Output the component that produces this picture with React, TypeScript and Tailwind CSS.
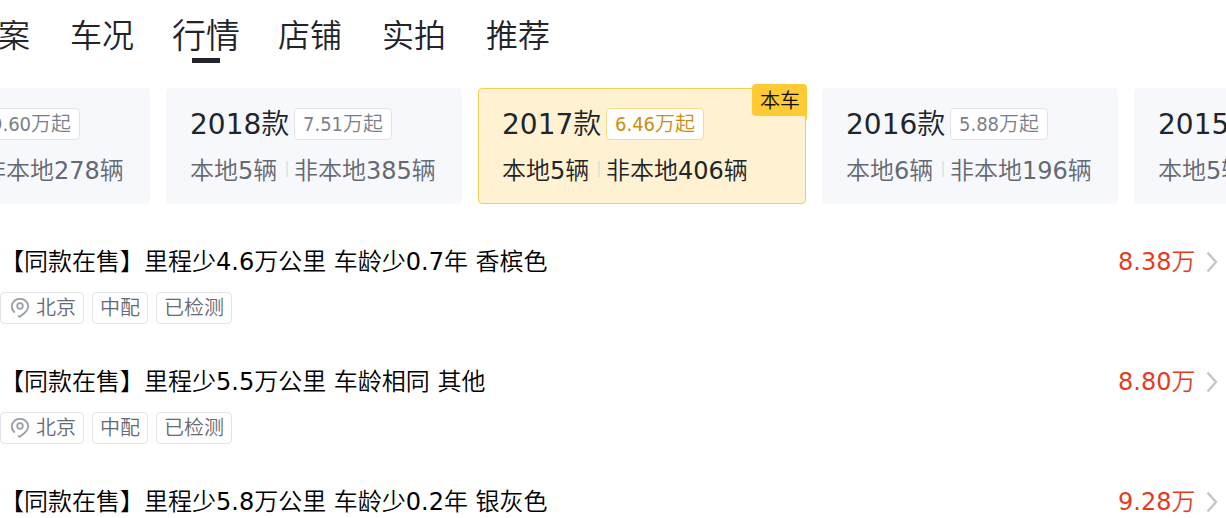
import React, { useState } from 'react';
import clsx from 'clsx';

interface YearModel {
  year: string;
  price: string;
  local: number;
  other: number;
  current?: boolean;
}

interface Listing {
  id: number;
  title: string;
  price: string;
  city: string;
  tags: string[];
}

const tabs = ['档案', '车况', '行情', '店铺', '实拍', '推荐'];

const models: YearModel[] = [
  { year: '2019款', price: '9.60万起', local: 5, other: 278 },
  { year: '2018款', price: '7.51万起', local: 5, other: 385 },
  { year: '2017款', price: '6.46万起', local: 5, other: 406, current: true },
  { year: '2016款', price: '5.88万起', local: 6, other: 196 },
  { year: '2015款', price: '5.20万起', local: 5, other: 152 },
];

const listings: Listing[] = [
  { id: 1, title: '【同款在售】里程少4.6万公里 车龄少0.7年 香槟色', price: '8.38万', city: '北京', tags: ['中配', '已检测'] },
  { id: 2, title: '【同款在售】里程少5.5万公里 车龄相同 其他', price: '8.80万', city: '北京', tags: ['中配', '已检测'] },
  { id: 3, title: '【同款在售】里程少5.8万公里 车龄少0.2年 银灰色', price: '9.28万', city: '北京', tags: ['中配', '已检测'] },
];

function PinIcon() {
  return (
    <svg className="mr-1.5 h-5 w-5 shrink-0" viewBox="0 0 20 20" fill="none" stroke="#9a9fac" strokeWidth="1.8" aria-hidden="true">
      <path d="M4.8 14.6C2.9 12.9 1.8 11 1.8 8.4A8.2 7.6 0 0 1 18.2 8.4C18.2 12.2 14.6 15.4 9.6 18.8L8 17.6" />
      <circle cx="10" cy="8" r="2.8" />
    </svg>
  );
}

function TabBar() {
  const [active, setActive] = useState('行情');

  return (
    <nav className="overflow-hidden">
      <div className="-ml-[54px] flex h-[72px]">
        {tabs.map((tab) => (
          <button
            key={tab}
            type="button"
            onClick={() => setActive(tab)}
            className="flex w-[104px] shrink-0 cursor-pointer flex-col items-center pt-3 text-[#222429]"
          >
            <span className={clsx('h-[46px] leading-[48px] whitespace-nowrap', tab === active ? 'text-[34px]' : 'text-[32px]')}>
              {tab}
            </span>
            {tab === active && <span className="h-[5px] w-7 bg-[#222429]" />}
          </button>
        ))}
      </div>
    </nav>
  );
}

function ModelCard({ model }: { model: YearModel }) {
  return (
    <a
      href={`#${model.year}`}
      className={clsx(
        'relative block h-[116px] shrink-0 rounded border py-[15px] pl-[23px] whitespace-nowrap',
        model.current ? 'w-[328px] border-[#ecd052] bg-[#fff2d2]' : 'w-[296px] border-[#f6f8fc] bg-[#f6f8fc]'
      )}
    >
      <div className="flex h-10 items-center gap-1">
        <span className="w-[100px] pt-0.5 text-[28px] leading-[42px] text-[#222429]">{model.year}</span>
        <span
          className={clsx(
            "mb-px w-[98px] rounded border bg-white text-center font-['DejaVu_Sans_Condensed','DejaVu_Sans','Noto_Sans_CJK_SC_DemiLight','Noto_Sans_CJK_SC',sans-serif] text-xl leading-[30px]",
            model.current ? 'border-[#f3dc8b] text-[#c98e10]' : 'border-[#e0e2e8] text-[#7b7f8a]'
          )}
        >
          {model.price}
        </span>
      </div>
      <div
        className={clsx(
          'mt-2 flex items-center text-2xl leading-[38px]',
          model.current ? 'text-[#222429]' : 'text-[#656973]'
        )}
      >
        <span className="w-24">本地{model.local}辆</span>
        <span className="mr-1.5 mb-1 h-4 w-0.5 bg-[#d9dbe0]/70" />
        <span>非本地{model.other}辆</span>
      </div>
      {model.current && (
        <span className="absolute -top-[5px] -right-0.5 h-8 rounded bg-[#ffca33] pr-[7px] pl-2 text-xl leading-[34px] text-[#111]">
          本车
          <svg className="absolute top-7 right-0 h-3 w-2" viewBox="0 0 8 12" aria-hidden="true">
            <path d="M8 0V11C8 7 7 4 4 4H0V0Z" fill="#ffca33" />
          </svg>
        </span>
      )}
    </a>
  );
}

function ListingRow({ item }: { item: Listing }) {
  return (
    <a href={`#car-${item.id}`} className="block h-[120px]">
      <div className="flex items-center justify-between pr-2 text-2xl leading-9 whitespace-nowrap">
        <h3 className="text-black">{item.title}</h3>
        <div className="flex items-center gap-2">
          <span className="w-20 text-[#e63c1e]">{item.price}</span>
          <svg className="h-6 w-3" viewBox="0 0 12 24" fill="none" stroke="#c4c6cb" strokeWidth="2.4" aria-hidden="true">
            <path d="M1.5 2.5L10 12L1.5 21.5" />
          </svg>
        </div>
      </div>
      <div className="mt-3 flex gap-2 text-xl leading-[30px] text-[#656973]">
        <span className="flex items-center rounded border border-[#e0e2e8] pr-[7px] pl-[9px]">
          <PinIcon />
          {item.city}
        </span>
        {item.tags.map((tag) => (
          <span key={tag} className="rounded border border-[#e0e2e8] px-[7px]">
            {tag}
          </span>
        ))}
      </div>
    </a>
  );
}

export default function App() {
  return (
    <main className="h-screen overflow-hidden bg-white font-['DejaVu_Sans','Noto_Sans_CJK_SC_DemiLight','Noto_Sans_CJK_SC',sans-serif]">
      <TabBar />
      <section className="overflow-hidden pt-4">
        <div className="-ml-[146px] flex gap-4">
          {models.map((model) => (
            <ModelCard key={model.year} model={model} />
          ))}
        </div>
      </section>
      <section className="mt-10">
        {listings.map((item) => (
          <ListingRow key={item.id} item={item} />
        ))}
      </section>
    </main>
  );
}
